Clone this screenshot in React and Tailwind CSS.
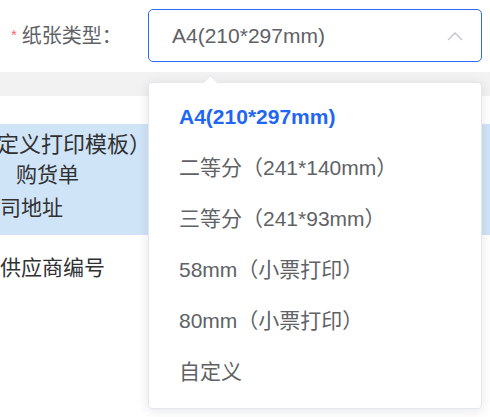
const options = [
  "A4(210*297mm)",
  "二等分（241*140mm）",
  "三等分（241*93mm）",
  "58mm（小票打印）",
  "80mm（小票打印）",
  "自定义",
];

export default function App() {
  const selected = 0;

  return (
    <div className="relative h-[417px] w-[490px] overflow-hidden bg-white font-['Liberation_Sans','Noto_Sans_CJK_SC',sans-serif]">
      <div className="flex h-[72px] items-start pt-[9px]">
        <label className="flex h-[53px] w-[148px] items-center pl-[11px] text-[20px] text-[#606266]">
          <span className="mr-[5px] text-[15px] text-[#f56c6c]">*</span>
          纸张类型：
        </label>
        <div className="flex h-[53px] w-[334px] items-center justify-between rounded-[5px] border border-[#2a6af6] pl-[23px] pr-[18px] text-[21px] text-[#606266]">
          <span>A4(210*297mm)</span>
          <svg width="16" height="10" viewBox="0 0 16 10" fill="none">
            <path d="M1 9 L8 2 L15 9" stroke="#c0c4cc" strokeWidth="1.4" />
          </svg>
        </div>
      </div>

      <div className="h-[24px] bg-[#f2f2f2]" />

      <div className="pt-[28px] text-[#303133]">
        <div className="h-[111px] bg-[#d0e4f7] pt-[9px]">
          <div className="ml-[-25px] text-[22px] leading-[24px]">自定义打印模板）</div>
          <div className="mt-[6px] pl-[16px] text-[21px] leading-[24px]">购货单</div>
          <div className="mt-[9px] ml-[-21px] text-[21px] leading-[24px]">公司地址</div>
        </div>
        <div className="mt-[21px] text-[21px] leading-[24px]">供应商编号</div>
      </div>

      <div className="absolute left-[148px] top-[82px] w-[334px] rounded-[4px] border border-[#e4e7ed] bg-white pb-[11px] pt-[8px] shadow-[0_2px_12px_rgba(0,0,0,0.1)]">
        <div className="absolute -top-[6px] left-[56px] h-[11px] w-[11px] rotate-45 border-l border-t border-[#e4e7ed] bg-white" />
        {options.map((opt, i) => (
          <div
            key={opt}
            className={
              i === selected
                ? "flex h-[51px] items-center pl-[30px] text-[21px] font-bold text-[#1f66f5]"
                : "flex h-[51px] items-center pl-[30px] text-[21px] text-[#606266]"
            }
          >
            {opt}
          </div>
        ))}
      </div>
    </div>
  );
}
